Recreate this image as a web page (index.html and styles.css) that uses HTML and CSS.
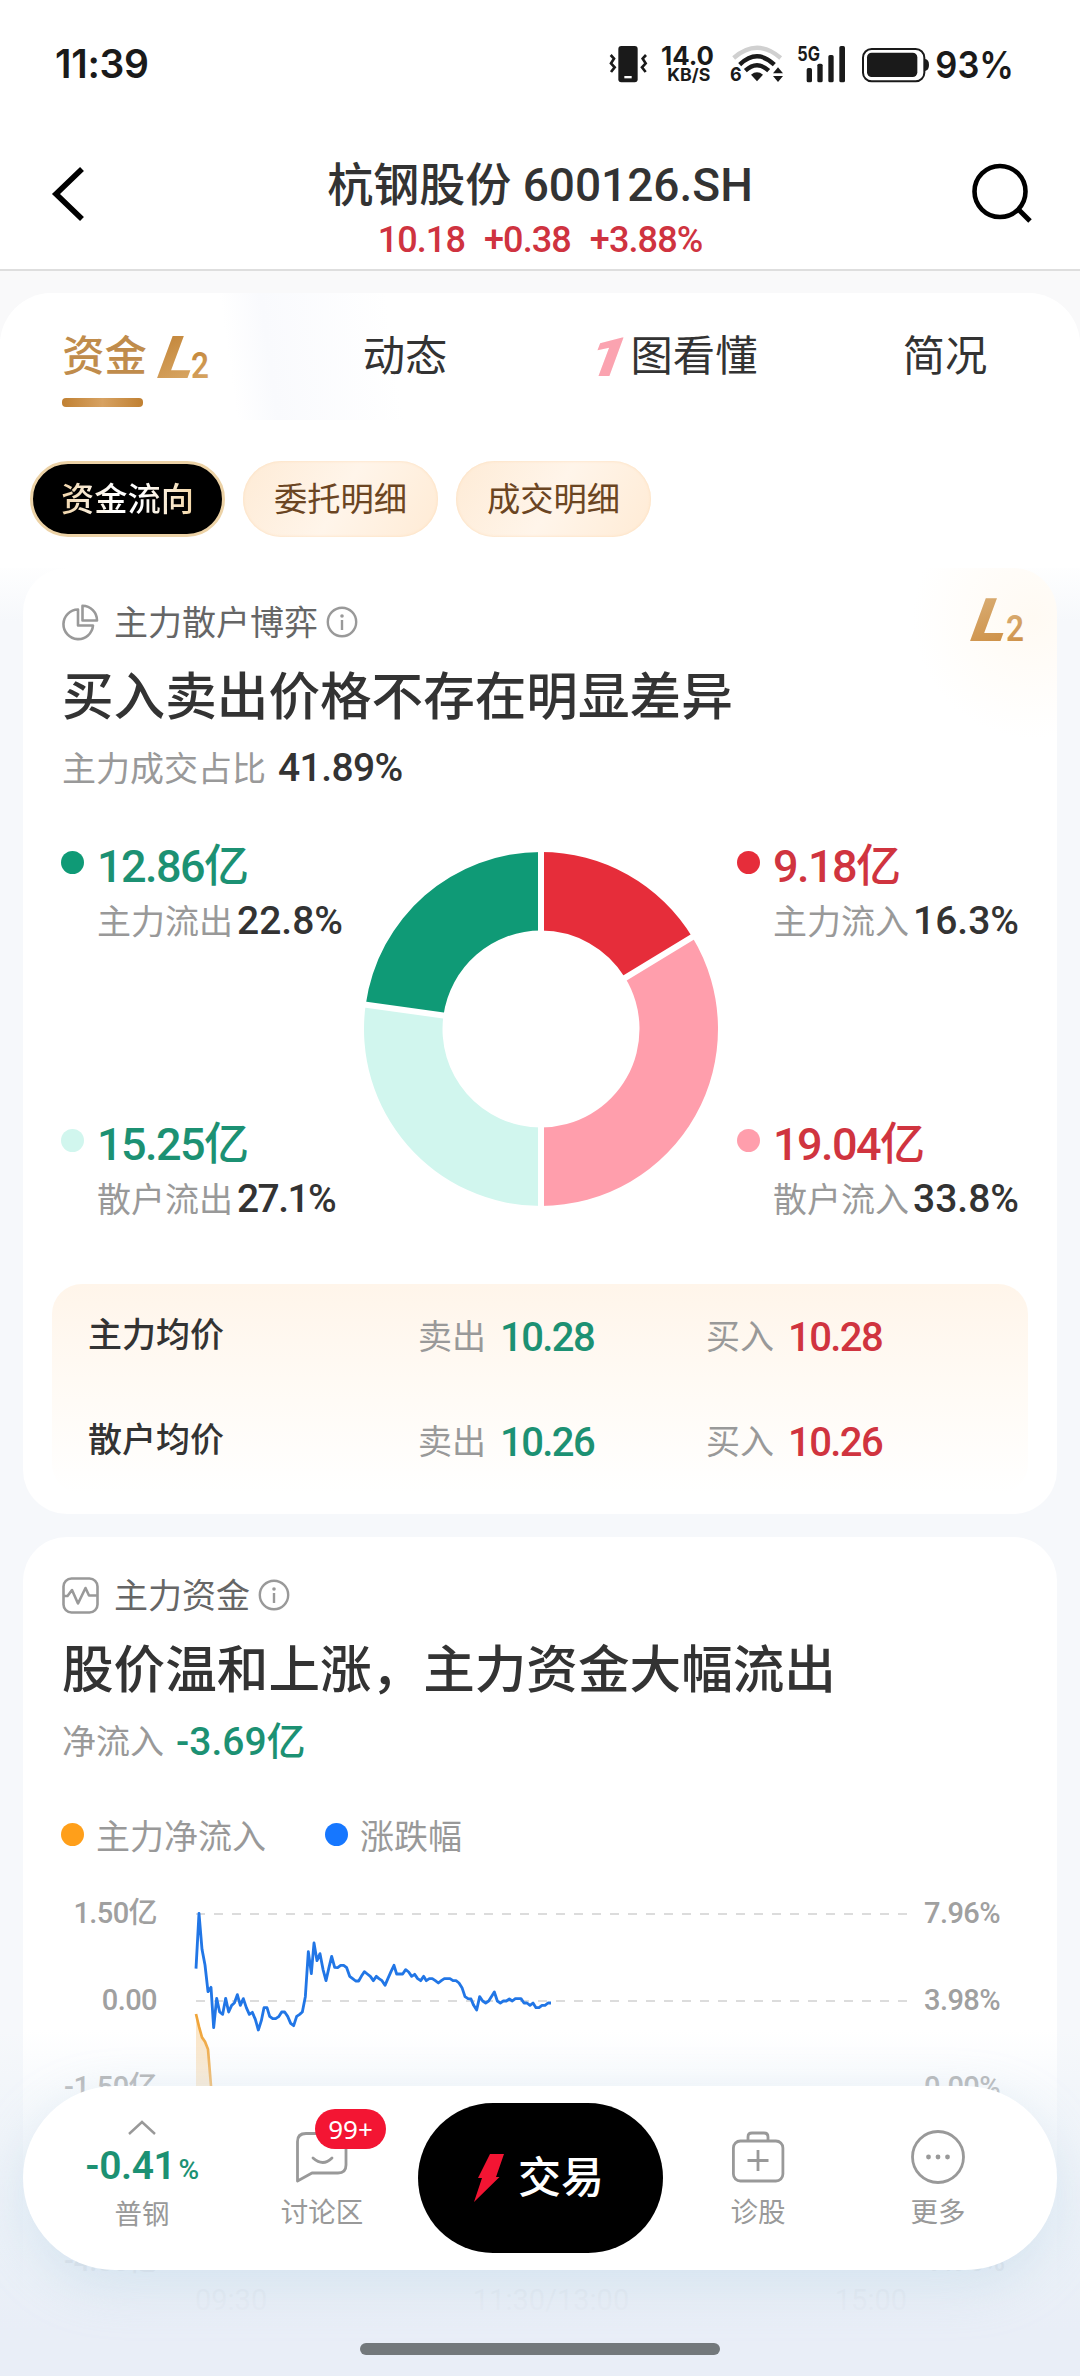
FILE: index.html
```html
<!DOCTYPE html>
<html lang="zh-CN">
<head>
<meta charset="utf-8">
<title>杭钢股份 600126.SH</title>
<link rel="stylesheet" href="styles.css">
</head>
<body>
<svg width="0" height="0" class="defs">
  <defs>
    <linearGradient id="gold" x1="0" y1="0" x2="0.3" y2="1"><stop offset="0" stop-color="#bf8032"/><stop offset="1" stop-color="#d8a664"/></linearGradient>
    <linearGradient id="goldLight" x1="0" y1="0" x2="0.2" y2="1"><stop offset="0" stop-color="#dbb27c"/><stop offset="1" stop-color="#cd8f45"/></linearGradient>
    <symbol id="info" viewBox="0 0 32 32"><circle cx="16" cy="16" r="14.2" fill="none" stroke="#999" stroke-width="2.4"/><circle cx="16" cy="10" r="1.8" fill="#999"/><path d="M16 14v10" stroke="#999" stroke-width="2.4"/></symbol>
  </defs>
</svg>

<header class="status">
  <span class="time">11:39</span>
  <svg class="status-icons" viewBox="0 0 1380 210" fill="#1a1a1a">
    <rect x="115" y="48" width="58" height="109" rx="9"/>
    <rect x="133" y="138" width="22" height="7" fill="#fff"/>
    <path d="M92 75l10 11-9 14 11 12-11 14M198 75l-10 11 9 14-11 12 11 14" fill="none" stroke="#1a1a1a" stroke-width="8"/>
    <text x="243" y="105" font-size="78" font-weight="700" textLength="159" lengthAdjust="spacingAndGlyphs">14.0</text>
    <text x="262" y="153" font-size="52" font-weight="700" textLength="129" lengthAdjust="spacingAndGlyphs">KB/S</text>
    <g fill="none" stroke-width="13">
      <path d="M461 84q70-61 141 0" stroke="#d0d0d0"/>
      <path d="M479 104q52-50 104 0" stroke="#1a1a1a"/>
      <path d="M496 122q35-32 70 0" stroke="#1a1a1a"/>
    </g>
    <path d="M513 134q18-14 36 0l-18 20zM594 112l15 18h-30zM594 156l15-18h-30z"/>
    <text x="450" y="154" font-size="58" font-weight="700" textLength="35" lengthAdjust="spacingAndGlyphs">6</text>
    <text x="652" y="92" font-size="60" font-weight="700" textLength="68" lengthAdjust="spacingAndGlyphs">5G</text>
    <rect x="680" y="114" width="16" height="43" rx="5"/><rect x="712" y="101" width="16" height="56" rx="5"/><rect x="745" y="75" width="16" height="82" rx="5"/><rect x="778" y="48" width="17" height="109" rx="5"/>
    <rect x="849" y="57" width="184" height="97" rx="26" fill="none" stroke="#1a1a1a" stroke-width="6"/>
    <rect x="861" y="68" width="151" height="73" rx="14"/>
    <path d="M1035 87q12 2 12 18t-12 18z"/>
    <text x="1066" y="143" font-size="110" font-weight="600" textLength="236" lengthAdjust="spacingAndGlyphs">93%</text>
  </svg>
</header>

<nav class="nav">
  <svg class="back" width="36" height="54" viewBox="0 0 36 54"><path d="M34 2L8 27l26 25" fill="none" stroke="#000" stroke-width="5.6"/></svg>
  <div class="nav-title">
    <h1>杭钢股份 600126.SH</h1>
    <p class="num"><span>10.18</span><span>+0.38</span><span>+3.88%</span></p>
  </div>
  <svg class="search" width="62" height="62" viewBox="0 0 62 62"><circle cx="30" cy="28.500" r="25.500" fill="none" stroke="#000" stroke-width="4.6"/><path d="M48 46l12 12" stroke="#000" stroke-width="5"/></svg>
</nav>

<main class="page">
  <section class="top">
    <div class="tabs">
      <div class="tab active"><span class="tab-label">资金</span><svg class="l2" width="53" height="44" viewBox="0 0 53 44" fill="url(#gold)"><text class="l2-l" transform="translate(2 43) skewX(-10)" font-size="59" textLength="35" lengthAdjust="spacingAndGlyphs">L</text><text class="l2-2" x="36" y="43" font-size="36" textLength="18" lengthAdjust="spacingAndGlyphs">2</text></svg></div>
      <div class="tab">动态</div>
      <div class="tab"><svg width="38" height="44" viewBox="0 0 38 44" fill="#fba3b0"><text class="one" transform="translate(-7 41) skewX(-9)" font-size="54" textLength="38" lengthAdjust="spacingAndGlyphs">1</text></svg>图看懂</div>
      <div class="tab">简况</div>
    </div>
    <div class="chips">
      <span class="chip on"><b>资金流向</b></span>
      <span class="chip">委托明细</span>
      <span class="chip">成交明细</span>
    </div>
  </section>

  <section class="card game">
    <svg class="l2 corner" width="56" height="46" viewBox="0 0 56 46" fill="url(#goldLight)"><text class="l2-l" transform="translate(2 44) skewX(-10)" font-size="60" textLength="35" lengthAdjust="spacingAndGlyphs">L</text><text class="l2-2" x="38" y="44" font-size="37" textLength="18" lengthAdjust="spacingAndGlyphs">2</text></svg>
    <div class="head">
      <svg width="37" height="37" viewBox="0 0 37 37" fill="none" stroke="#999" stroke-width="2.6" stroke-linejoin="round"><path d="M16 5.500A14.800 14.800 0 1 0 31 21.500H16z"/><path d="M20.500 1.800A14.500 14.500 0 0 1 35 16.500H20.500z"/></svg>
      <span>主力散户博弈</span><svg width="32" height="32"><use href="#info"/></svg>
    </div>
    <h2>买入卖出价格不存在明显差异</h2>
    <p class="sub"><span>主力成交占比</span><strong class="num">41.89%</strong></p>

    <div class="figure">
      <div class="side">
        <div class="leg green"><i class="dot g1"></i><div><p class="amount"><span class="num">12.86</span>亿</p><p class="share">主力流出<strong>22.8%</strong></p></div></div>
        <div class="leg green"><i class="dot g2"></i><div><p class="amount"><span class="num">15.25</span>亿</p><p class="share">散户流出<strong class="tight">27.1%</strong></p></div></div>
      </div>
      <svg class="donut" width="354" height="354" viewBox="-177 -177 354 354">
        <path d="M0-177A177 177 0 0 1 151.240-91.950L84.170-51.180A98.500 98.500 0 0 0 0-98.500z" fill="#e62d3a"/>
        <path d="M151.240-91.950A177 177 0 0 1 0 177L0 98.500A98.500 98.500 0 0 0 84.170-51.180z" fill="#ff9eac"/>
        <path d="M0 177A177 177 0 0 1-175.330-24.260L-97.570-13.500A98.500 98.500 0 0 0 0 98.500z" fill="#d1f6ee"/>
        <path d="M-175.330-24.260A177 177 0 0 1 0-177L0-98.500A98.500 98.500 0 0 0-97.570-13.500z" fill="#0f9a76"/>
        <path d="M0-180V-95M154-93.600L80-48.600M0 95V180M-178.500-24.700L-94-13" stroke="#fff" stroke-width="6"/>
      </svg>
      <div class="side right">
        <div class="leg red"><i class="dot r1"></i><div><p class="amount"><span class="num">9.18</span>亿</p><p class="share">主力流入<strong>16.3%</strong></p></div></div>
        <div class="leg red"><i class="dot r2"></i><div><p class="amount"><span class="num">19.04</span>亿</p><p class="share">散户流入<strong>33.8%</strong></p></div></div>
      </div>
    </div>

    <div class="prices">
      <b>主力均价</b><span>卖出<strong class="num sell">10.28</strong></span><span>买入<strong class="num buy">10.28</strong></span>
      <b>散户均价</b><span>卖出<strong class="num sell">10.26</strong></span><span>买入<strong class="num buy">10.26</strong></span>
    </div>
  </section>

  <section class="card funds">
    <div class="head">
      <svg width="37" height="37" viewBox="0 0 37 37" fill="none" stroke="#999" stroke-width="2.6" stroke-linejoin="round"><rect x="1.500" y="1.500" width="34" height="34" rx="8"/><path d="M2 19h3.500L10 13l6 13.500L23.500 11l3.500 7.500h8"/></svg>
      <span>主力资金</span><svg width="32" height="32"><use href="#info"/></svg>
    </div>
    <h2>股价温和上涨，主力资金大幅流出</h2>
    <p class="sub"><span>净流入</span><strong class="net">-3.69亿</strong></p>
    <div class="keys"><span><i class="dot o"></i>主力净流入</span><span><i class="dot b"></i>涨跌幅</span></div>
    <div class="chart">
      <div class="axis left"><span>1.50亿</span><span>0.00</span><span>-1.50亿</span><span>-3.00亿</span><span>-4.50亿</span></div>
      <div class="plot">
        <svg width="712" height="392" viewBox="45 -90 2136 1176" fill="none">
          <path d="M48 42H2181M48 303H2181" stroke="#dcdcdc" stroke-width="6" stroke-dasharray="27 27"/>
          <path d="M48 345L66 412 75 425 84 448 94 600V1086H48z" fill="#fbe6c8"/>
          <path d="M48 342L57 380 66 412 75 425 84 448 94 570 98 800" stroke="#f0a53a" stroke-width="8"/>
          <path d="M48 206L57 40 66 148 75 195 84 275 93 262 101 383 110 295 119 336 128 343 137 295 146 336 155 316 163 309 172 284 181 316 190 296 199 323 208 343 217 337 226 358 235 390 244 362 252 323 261 323 269 349 278 356 287 356 296 350 305 336 314 336 323 349 332 370 341 377 350 349 359 343 367 336 376 290 385 155 394 221 402 129 411 182 420 161 429 208 438 242 447 202 455 169 464 202 473 203 482 196 491 196 500 203 509 229 518 236 527 243 536 243 544 229 553 215 562 222 571 229 580 242 589 229 597 236 606 242 615 256 624 235 633 215 642 196 650 222 668 222 677 209 686 216 695 229 704 223 713 236 722 242 731 229 739 242 748 236 757 236 766 242 775 249 784 242 793 236 810 236 819 242 828 242 837 249 846 263 855 290 864 296 873 297 881 316 890 330 899 290 908 303 917 309 926 303 935 289 943 276 952 303 961 309 970 303 979 303 988 297 997 303 1006 296 1023 296 1032 309 1041 309 1050 316 1059 309 1068 323 1077 323 1086 316 1095 316 1104 309 1113 309" stroke="#2176e6" stroke-width="8.500" stroke-linejoin="round"/>
        </svg>
        <div class="hours"><span>09:30</span><span>11:30/13:00</span><span>15:00</span></div>
      </div>
      <div class="axis rightax"><span>7.96%</span><span>3.98%</span><span>0.00%</span><span>-3.98%</span><span>-7.96%</span></div>
    </div>
  </section>
</main>

<footer class="dock">
  <div class="bar">
    <div class="item">
      <svg class="up" width="30" height="16" viewBox="0 0 30 16"><path d="M2 14L15 2l13 12" fill="none" stroke="#999" stroke-width="2.400"/></svg>
      <p class="idx">-0.41<small>%</small></p>
      <span>普钢</span>
    </div>
    <div class="item">
      <svg class="ic" width="56" height="56" viewBox="0 0 56 56" fill="none" stroke="#999" stroke-width="2.800" stroke-linejoin="round" stroke-linecap="round"><path d="M12 4.500H44Q52 4.500 52 12.500V36Q52 44 44 44H18L3.500 52V12.500Q3.500 4.500 12 4.500z"/><path d="M19 29q10 9 19 0"/></svg>
      <span>讨论区</span><em class="badge">99+</em>
    </div>
    <button class="trade"><svg width="32" height="48" viewBox="0 0 32 48"><path d="M17 0H31L23 23H26.500L1 48 9 24H5z" fill="#f31533"/></svg>交易</button>
    <div class="item">
      <svg class="ic" width="56" height="56" viewBox="0 0 56 56" fill="none" stroke="#999" stroke-width="2.800"><rect x="3.400" y="12" width="49.500" height="40" rx="7"/><path d="M18 12V8Q18 4 22 4H34Q38 4 38 8V12M28 21V42M17.500 31.500H38.500"/></svg>
      <span>诊股</span>
    </div>
    <div class="item">
      <svg class="ic" width="56" height="56" viewBox="0 0 56 56" fill="#999"><circle cx="28" cy="28" r="25.500" fill="none" stroke="#999" stroke-width="2.800"/><circle cx="18.500" cy="28" r="2.400"/><circle cx="28" cy="28" r="2.400"/><circle cx="37.500" cy="28" r="2.400"/></svg>
      <span>更多</span>
    </div>
  </div>
  <i class="home"></i>
</footer>
</body>
</html>
```

FILE: styles.css
```css
* { box-sizing: border-box; margin: 0; padding: 0; }
body {
  position: relative;
  width: 1080px;
  height: 2376px;
  overflow: hidden;
  background: #f6f8fb;
  color: #333;
  font-family: Roboto, "Noto Sans CJK SC", sans-serif;
}
svg { display: block; flex: none; overflow: visible; }
.defs { position: absolute; }
i, em { font-style: normal; }
.num { letter-spacing: -0.015em; }

.status { display: flex; justify-content: space-between; align-items: center; height: 130px; padding: 0 40px 0 55px; background: #fff; }
.time { margin-top: -3px; font: 600 39px/40px Inter, sans-serif; color: #1a1a1a; letter-spacing: -0.3px; }
.status-icons { width: 460px; height: 70px; font-family: Inter, sans-serif; }

.nav { display: flex; justify-content: space-between; align-items: flex-start; height: 141px; padding: 0 48px; background: #fff; border-bottom: 2px solid #dedede; }
.back { margin-top: 37px; }
.search { margin-top: 33px; }
.nav-title { padding-top: 25px; text-align: center; transform: translateX(13px); }
.nav-title h1 { font-size: 46px; line-height: 60px; font-weight: 500; white-space: nowrap; }
.nav-title p { display: flex; justify-content: center; gap: 19px; font-size: 36px; line-height: 50px; font-weight: 500; letter-spacing: -0.025em; color: #cf3340; }

.page { padding-top: 22px; background: linear-gradient(#f9f9fa 0, #f9f9fa 200px, #fff 290px, #f6f8fb 350px); }
.top { height: 275px; border-radius: 52px 52px 0 0; background: #fff; }
.tabs { display: grid; grid-template-columns: repeat(4, 270px); height: 127px; border-radius: 52px 52px 0 0; background: linear-gradient(82deg, #fff 235px, #f9fafd 275px, #fff 400px); }
.tab { display: flex; justify-content: center; align-items: center; height: 127px; font-size: 42.3px; line-height: 60px; }
.tab.active { position: relative; color: #c08c4c; font-weight: 500; gap: 8px; }
.tab.active::after { content: ""; position: absolute; left: 62px; top: 105px; width: 81px; height: 9px; border-radius: 4px; background: linear-gradient(90deg, #c08032, #d7a262, #c08032); }
.l2-l, .one { font-weight: 900; font-style: italic; }
.l2-2 { font-weight: 600; }
.chips { display: flex; gap: 18px; padding: 41px 30px 0; }
.chip { width: 195px; height: 76px; border-radius: 38px; text-align: center; font-size: 33.3px; line-height: 78px; color: #6b4522; background: linear-gradient(120deg, #feebd6, #fff5ea 50%, #ffebd5); box-shadow: inset 0 0 3px #fbdcb8; }
.chip.on { border: 3px solid #ecd2a6; line-height: 72px; background: #000; box-shadow: none; }
.chip b { font-weight: 500; color: transparent; background: linear-gradient(90deg, #f0d4a8, #fff 40%, #fff 60%, #f3d6a6); -webkit-background-clip: text; background-clip: text; }

.card { position: relative; width: 1034px; margin: 0 auto; padding: 0 39px; border-radius: 44px; background: #fff; }
.game { height: 946px; padding-top: 20px; background: radial-gradient(circle at 1010px 50px, #fffaf3 0, #fff 120px); }
.corner { position: absolute; left: 945px; top: 29px; }
.head { display: flex; align-items: center; height: 68px; font-size: 34px; color: #666; }
.head span { margin: -3px 8px 0 15px; }
h2 { padding-top: 3px; font-size: 51.6px; line-height: 77px; font-weight: 500; white-space: nowrap; }
.sub { display: flex; align-items: center; height: 64px; font-size: 34px; color: #999; }
.sub span { margin-top: -4px; }
.sub strong { margin-left: 12px; font-size: 39px; font-weight: 500; color: #333; }
.sub .net { margin-top: -6px; color: #1c9173; }
.dot { flex: none; width: 23px; height: 23px; margin-left: -1px; border-radius: 50%; }
.g1 { background: #0f9a76; } .g2 { background: #d1f6ee; }
.r1 { background: #e62d3a; } .r2 { background: #ff9eac; }
.o { background: #ff9f1a; } .b { background: #1677ff; }
.figure { display: grid; grid-template-columns: 302px 354px 300px; height: 391px; margin-top: 32px; }
.donut { margin-top: 20px; }
.side { display: flex; flex-direction: column; justify-content: space-between; }
.side.right { padding-left: 20px; }
.leg { display: flex; gap: 13px; white-space: nowrap; }
.leg .dot { margin-top: 19px; }
.amount { padding-top: 3px; font-size: 45px; line-height: 63px; font-weight: 500; }
.amount .num { letter-spacing: -0.035em; }
.green .amount { color: #1c9173; }
.red .amount { color: #d0343f; }
.share { font-size: 34px; line-height: 46px; color: #999; }
.share strong { margin-left: 4px; font-size: 39px; font-weight: 500; color: #333; }
.share .tight { letter-spacing: -0.04em; }
.prices { display: grid; grid-template-columns: 330px 288px 1fr; margin: 61px -10px 0; padding-left: 36px; border-radius: 30px; background: linear-gradient(#fff5ea, #fffaf4 45%, #fff); font-size: 34px; line-height: 103px; color: #999; }
.prices b { font-weight: 500; color: #333; }
.prices strong { position: relative; top: 2px; margin-left: 14px; font-size: 40px; font-weight: 500; letter-spacing: -0.04em; }
.prices .sell { color: #1c9173; }
.prices .buy { color: #d0343f; }

.funds { height: 860px; margin-top: 23px; padding-top: 24px; }
.keys { display: flex; gap: 60px; height: 62px; margin-top: 30px; font-size: 34px; color: #999; }
.keys span { display: flex; align-items: center; gap: 12px; }
.chart { display: flex; padding-top: 5px; }
.axis { display: flex; flex-direction: column; font-size: 29px; line-height: 87px; font-weight: 500; letter-spacing: -0.02em; color: #a0a0a0; white-space: nowrap; }
.left { width: 95px; margin-right: 38px; align-items: flex-end; }
.rightax { width: 110px; align-items: center; }
.hours { display: flex; justify-content: space-between; font-size: 29px; line-height: 76px; color: #888; }

.dock { position: absolute; left: 0; right: 0; bottom: 0; height: 346px; padding: 56px 23px 0; background: linear-gradient(rgba(238,243,249,0) 0, rgba(236,242,248,.4) 60px, rgba(232,239,247,.75) 200px, rgba(233,239,247,.95) 260px, #e9eef7 300px); }
.bar { display: flex; height: 184px; padding: 0 29px; border-radius: 92px; background: #fff; box-shadow: 0 16px 50px rgba(180,207,228,.4); }
.item { position: relative; display: flex; flex-direction: column; align-items: center; width: 180px; color: #999; font-size: 27.5px; line-height: 36px; }
.up { margin-top: 34px; }
.ic { margin-top: 43px; margin-bottom: 10px; }
.idx { margin-top: 11px; margin-bottom: 8px; font-size: 39px; line-height: 38px; font-weight: 600; letter-spacing: -0.01em; color: #1c9173; }
.idx small { margin-left: 3px; font-size: 28px; font-weight: 500; }
.badge { position: absolute; left: 83px; top: 23px; width: 71px; height: 40px; border-radius: 20px; background: #f31533; color: #fff; text-align: center; font: 26px/40px "Noto Sans", sans-serif; }
.trade { display: flex; justify-content: center; align-items: center; gap: 13px; width: 245px; height: 150px; margin: 17px 5px 0 6px; padding-right: 4px; border: 0; border-radius: 75px; background: #000; color: #fff; font: 500 43px/60px Roboto, "Noto Sans CJK SC", sans-serif; }
.home { display: block; width: 360px; height: 12px; margin: 73px auto 0; border-radius: 6px; background: #73787b; }
```
